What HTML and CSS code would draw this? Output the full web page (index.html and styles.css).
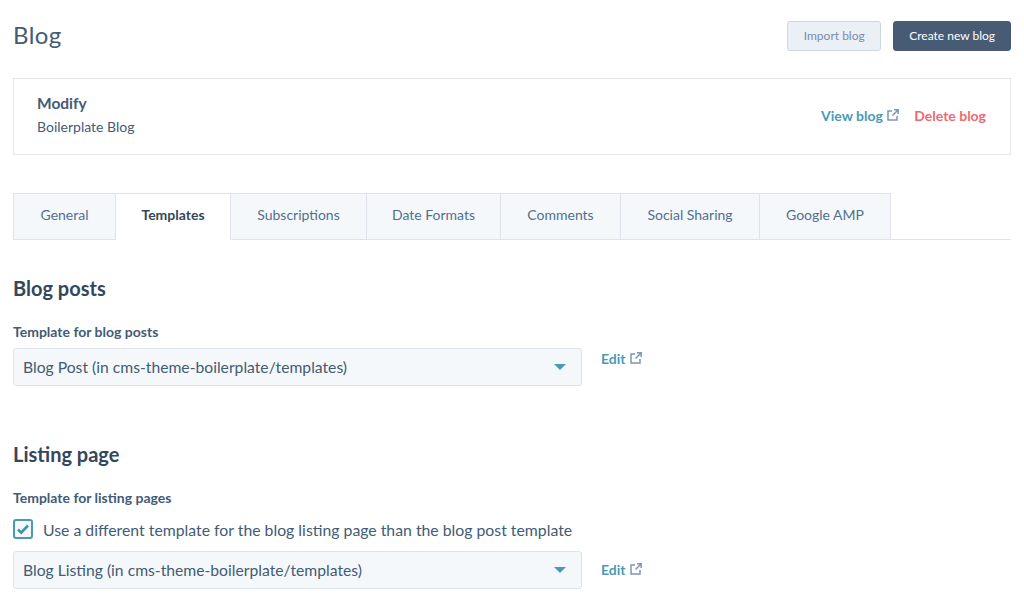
FILE: index.html
```html
<!DOCTYPE html>
<html lang="en">
<head>
    <meta charset="UTF-8">
    <title>Blog</title>
    <link rel="stylesheet" href="styles.css">
</head>
<body>
    <div class="header">
        <h1>Blog</h1>
        <div class="header-actions">
            <button class="btn btn-light">Import blog</button>
            <button class="btn btn-dark">Create new blog</button>
        </div>
    </div>

    <div class="modify-card">
        <div class="modify-info">
            <div class="modify-title">Modify</div>
            <div class="modify-name">Boilerplate Blog</div>
        </div>
        <div class="modify-links">
            <a class="link">View blog
                <svg class="ext" viewBox="0 0 12 12"><path d="M5 2H1v9h9V7M7 .8h4.2V5M11 1L5.5 6.5"/></svg>
            </a>
            <a class="link-danger">Delete blog</a>
        </div>
    </div>

    <div class="tabs">
        <div class="tab">General</div>
        <div class="tab active">Templates</div>
        <div class="tab">Subscriptions</div>
        <div class="tab">Date Formats</div>
        <div class="tab">Comments</div>
        <div class="tab">Social Sharing</div>
        <div class="tab">Google AMP</div>
    </div>

    <h2 class="first">Blog posts</h2>
    <div class="field-label">Template for blog posts</div>
    <div class="select-row">
        <div class="select">
            <span>Blog Post (in cms-theme-boilerplate/templates)</span>
            <span class="caret"></span>
        </div>
        <a class="link edit-top">Edit
            <svg class="ext" viewBox="0 0 12 12"><path d="M5 2H1v9h9V7M7 .8h4.2V5M11 1L5.5 6.5"/></svg>
        </a>
    </div>

    <h2 class="second">Listing page</h2>
    <div class="field-label">Template for listing pages</div>
    <label class="check-row">
        <span class="checkbox">
            <svg viewBox="0 0 16 16"><path d="M3 8.5l3.3 3.2L13 4.5"/></svg>
        </span>
        Use a different template for the blog listing page than the blog post template
    </label>
    <div class="select-row">
        <div class="select">
            <span>Blog Listing (in cms-theme-boilerplate/templates)</span>
            <span class="caret"></span>
        </div>
        <a class="link edit-bottom">Edit
            <svg class="ext" viewBox="0 0 12 12"><path d="M5 2H1v9h9V7M7 .8h4.2V5M11 1L5.5 6.5"/></svg>
        </a>
    </div>
</body>
</html>
```

FILE: styles.css
```css
* {
    margin: 0;
    padding: 0;
    box-sizing: border-box;
}

body {
    background: #fff;
    color: #33475b;
    font-family: "Lato", sans-serif;
    font-size: 14px;
    padding: 21px 13px 0 13px;
    height: 607px;
    overflow: hidden;
}

.header {
    display: flex;
    justify-content: space-between;
    align-items: center;
    height: 30px;
}

h1 {
    font-size: 24px;
    font-weight: 400;
    letter-spacing: 0.4px;
    color: #425b76;
    margin-top: -4px;
}

.header-actions {
    display: flex;
    gap: 12px;
}

.btn {
    font-family: inherit;
    font-size: 12px;
    height: 30px;
    padding: 0 15px 2px;
    border-radius: 3px;
}

.btn-light {
    padding: 0 15.5px 2px;
    background: #eaf0f6;
    border: 1px solid #cbd6e2;
    color: #7c8ba6;
}

.btn-dark {
    background: #475b75;
    border: 1px solid #475b75;
    color: #fff;
}

.modify-card {
    display: flex;
    justify-content: space-between;
    align-items: center;
    height: 77px;
    margin-top: 27px;
    padding: 0 24px 0 23px;
    border: 1px solid #e5e8ee;
}

.modify-info {
    padding-bottom: 4px;
}

.modify-title {
    font-size: 15.5px;
    font-weight: 700;
    margin-bottom: 6px;
    color: #425b76;
}

.modify-name {
    font-size: 14px;
    color: #425b76;
}

.modify-links {
    display: flex;
    align-items: center;
    gap: 15px;
    padding-bottom: 2px;
    font-size: 14px;
    font-weight: 700;
}

.link {
    color: #4a9ab5;
    font-weight: 700;
    font-size: 14px;
}

.link-danger {
    color: #ee6a6f;
}

.ext {
    width: 12px;
    height: 12px;
    margin-left: 1px;
    fill: none;
    stroke: #7c98b6;
    stroke-width: 1.5;
}

.tabs {
    display: grid;
    grid-template-columns: 102px 116px 136px 134px 120px 139px 131px;
    height: 47px;
    margin-top: 38px;
    border-bottom: 1px solid #dfe3eb;
}

.tab {
    height: 47px;
    line-height: 42px;
    text-align: center;
    font-size: 14px;
    color: #516f90;
    background: #f5f8fa;
    border: 1px solid #dfe3eb;
    border-left: none;
}

.tab:first-child {
    border-left: 1px solid #dfe3eb;
    margin-right: -1px;
}

.tab:nth-child(2) {
    margin-left: 1px;
}

.tab.active {
    background: #fff;
    border-bottom: 1px solid #fff;
    font-weight: 700;
    color: #33475b;
}

h2 {
    font-size: 20px;
    font-weight: 700;
    color: #33475b;
}

.first {
    margin-top: 36px;
}

.second {
    margin-top: 56px;
}

.field-label {
    font-size: 14px;
    font-weight: 700;
    color: #425b76;
    margin-top: 23px;
    margin-bottom: 8px;
}

.select-row {
    display: flex;
    align-items: center;
    gap: 19px;
}

.select {
    display: flex;
    justify-content: space-between;
    align-items: center;
    width: 569px;
    height: 38px;
    padding: 0 15px 0 9px;
    font-size: 15.7px;
    color: #425b76;
    background: #f5f8fa;
    border: 1px solid #dbe3ec;
    border-radius: 3px;
}

.caret {
    width: 0;
    height: 0;
    border-left: 6px solid transparent;
    border-right: 6px solid transparent;
    border-top: 6px solid #4a9ab5;
}

.edit-top {
    margin-bottom: 18px;
}

.edit-bottom {
    margin-bottom: 2px;
}

.check-row {
    display: flex;
    align-items: center;
    gap: 10px;
    font-size: 15.8px;
    color: #425b76;
    margin: 13px 0 12px 1px;
}

.checkbox {
    width: 20px;
    height: 20px;
    margin-left: -1px;
    border: 2px solid #4a9ab5;
    border-radius: 3px;
    background: #f5f8fa;
}

.checkbox svg {
    display: block;
    width: 16px;
    height: 16px;
    fill: none;
    stroke: #3f93ad;
    stroke-width: 2.6;
}
```
